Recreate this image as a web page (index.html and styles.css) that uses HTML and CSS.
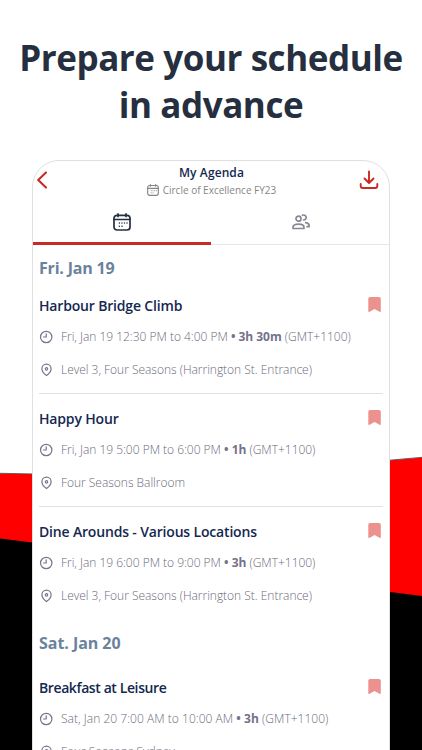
FILE: index.html
```
<!DOCTYPE html>
<html lang="en">
<head>
<meta charset="utf-8">
<title>My Agenda</title>
<link rel="stylesheet" href="styles.css">
</head>
<body>
<svg class="backdrop" viewBox="0 0 422 750" aria-hidden="true">
  <path d="M0 473.500L200 477L422 457.500V750H0z" fill="#f00"/>
  <path d="M0 473.300L200 477L422 457.300" fill="none" stroke="#444" stroke-width=".8"/>
  <path d="M0 538.500L32 542.500L390 592L422 596V750H0z" fill="#000"/>
</svg>
<svg class="symbols" aria-hidden="true">
  <symbol id="calendar" viewBox="0 0 18 18"><g fill="none" stroke="currentColor" stroke-linecap="round" stroke-width="1.700"><rect x="1" y="2.300" width="16" height="14.700" rx="3"/><path d="M1 6.500h16M5 .9v2.500M13 .9v2.500"/><path d="M8.900 10h.1M11.500 10h.1M14 10h.1M6.300 10h.1M6.300 13.200h.1M9 13.200h.1" stroke-width="1.400"/></g></symbol>
  <symbol id="clock" viewBox="0 0 14 14"><g fill="none" stroke="currentColor" stroke-width="1.200" stroke-linecap="round" stroke-linejoin="round"><circle cx="7.200" cy="7" r="5.700"/><path d="M7.200 3.800V7H4.500"/></g></symbol>
  <symbol id="pin" viewBox="0 0 14 14"><g fill="none" stroke="currentColor" stroke-width="1.200"><path d="M7.500 12.500C5.100 10.800 2.900 8.500 2.900 5.700a4.600 4.600 0 0 1 9.200 0c0 2.800-2.200 5.100-4.600 6.800z"/><circle cx="7.500" cy="5.900" r="1.200"/></g></symbol>
  <symbol id="bookmark" viewBox="0 0 13 15"><path d="M2 0h9a1.800 1.800 0 0 1 1.800 1.800v12.400c0 .8-.7 1-1.300.6L6.500 12l-4.800 2.800C1 15.200.3 15 .3 14.200V1.800A1.800 1.800 0 0 1 2 0z" fill="currentColor"/></symbol>
</svg>

<h1 class="headline">Prepare your schedule<br>in advance</h1>

<main class="card">
  <header class="topbar">
    <svg class="back" viewBox="0 0 12 18"><path d="M10 1.500L2.200 9L10 16.500" fill="none" stroke="currentColor" stroke-width="2.100" stroke-linecap="round" stroke-linejoin="round"/></svg>
    <div class="heading">
      <div class="title">My Agenda</div>
      <div class="subtitle"><svg class="mini"><use href="#calendar"/></svg><span>Circle of Excellence FY23</span></div>
    </div>
    <svg class="download" viewBox="0 0 20 20"><path d="M10 1.500v11M5.500 8.500L10 13L14.500 8.500M1.700 14v2a2 2 0 0 0 2 2h12.600a2 2 0 0 0 2-2v-2" fill="none" stroke="currentColor" stroke-width="1.900" stroke-linecap="round" stroke-linejoin="round"/></svg>
  </header>
  <nav class="tabs">
    <div class="tab active"><svg class="tab-icon"><use href="#calendar"/></svg></div>
    <div class="tab"><svg class="people" viewBox="0 0 18 16"><g fill="none" stroke="currentColor" stroke-width="1.700" stroke-linecap="round" stroke-linejoin="round"><circle cx="6.500" cy="4.700" r="2.500"/><path d="M1 14.500v-1c0-2.200 1.900-3.300 5.500-3.300s5.500 1.100 5.500 3.300v1z"/><path d="M10.500 1.300a2.500 2.500 0 1 1 1 4.700M13.700 8.600c2.300.3 3.400 1.400 3.400 2.900v1.200h-2"/></g></svg></div>
  </nav>

  <h2 class="day">Fri. Jan 19</h2>
  <article class="event">
    <div class="event-head"><h3>Harbour Bridge Climb</h3><svg class="bookmark"><use href="#bookmark"/></svg></div>
    <p class="row"><svg><use href="#clock"/></svg><span>Fri, Jan 19 12:30 PM to 4:00 PM <b>• 3h 30m</b> (GMT+1100)</span></p>
    <p class="row place"><svg><use href="#pin"/></svg><span>Level 3, Four Seasons (Harrington St. Entrance)</span></p>
  </article>
  <article class="event">
    <div class="event-head"><h3>Happy Hour</h3><svg class="bookmark"><use href="#bookmark"/></svg></div>
    <p class="row"><svg><use href="#clock"/></svg><span>Fri, Jan 19 5:00 PM to 6:00 PM <b>• 1h</b> (GMT+1100)</span></p>
    <p class="row place"><svg><use href="#pin"/></svg><span>Four Seasons Ballroom</span></p>
  </article>
  <article class="event last">
    <div class="event-head"><h3>Dine Arounds - Various Locations</h3><svg class="bookmark"><use href="#bookmark"/></svg></div>
    <p class="row"><svg><use href="#clock"/></svg><span>Fri, Jan 19 6:00 PM to 9:00 PM <b>• 3h</b> (GMT+1100)</span></p>
    <p class="row place"><svg><use href="#pin"/></svg><span>Level 3, Four Seasons (Harrington St. Entrance)</span></p>
  </article>
  <h2 class="day later">Sat. Jan 20</h2>
  <article class="event last">
    <div class="event-head"><h3 class="tight">Breakfast at Leisure</h3><svg class="bookmark"><use href="#bookmark"/></svg></div>
    <p class="row wide"><svg><use href="#clock"/></svg><span>Sat, Jan 20 7:00 AM to 10:00 AM <b>• 3h</b> (GMT+1100)</span></p>
    <p class="row place"><svg><use href="#pin"/></svg><span>Four Seasons Sydney</span></p>
  </article>
</main>
</body>
</html>
```
FILE: styles.css
```
* { box-sizing: border-box; }
html, body { height: 750px; overflow: hidden; }
body {
  margin: 0;
  position: relative;
  background: #fff;
  font-family: "Open Sans", "Noto Sans", sans-serif;
}
svg { display: block; flex: none; }
.symbols { display: none; }
.backdrop { position: absolute; inset: 0; width: 422px; height: 750px; z-index: -1; }
.headline {
  margin: 0;
  padding-top: 34px;
  height: 160px;
  text-align: center;
  font-size: 35px;
  line-height: 47px;
  font-weight: 700;
  letter-spacing: -.43px;
  color: #262f40;
  white-space: nowrap;
}
.card {
  width: 358px;
  height: 620px;
  margin-left: 32px;
  background: #fff;
  border: 1px solid #e0e0e3;
  border-radius: 27px 27px 0 0;
  overflow: hidden;
}
.topbar { display: flex; height: 42px; padding: 0 10px 0 3px; justify-content: space-between; }
.back { width: 12px; height: 18px; margin-top: 10px; color: #cb2a24; }
.download { width: 20px; height: 20px; margin-top: 9px; color: #cb2a24; }
.heading { text-align: center; margin-left: 16px; }
.title { font-size: 12px; line-height: 18px; margin-top: 3px; font-weight: 600; letter-spacing: .1px; color: #14284f; }
.subtitle { display: flex; align-items: center; gap: 4px; font-size: 10px; line-height: 16px; color: #858585; }
.mini { width: 12px; height: 12px; }
.tabs { display: flex; height: 42px; border-bottom: 1px solid #e6e6e8; }
.tab { width: 178px; display: flex; justify-content: center; padding-top: 10px; color: #888993; }
.tab.active { height: 42px; border-bottom: 3px solid #cb2a24; color: #262f40; }
.tab-icon { width: 18px; height: 18px; }
.people { width: 18px; height: 16px; margin: 1px 0 0 2px; }
.day { margin: 0; padding: 12px 0 0 6px; height: 36px; font-size: 16px; line-height: 22px; font-weight: 700; letter-spacing: -.2px; color: #6b829c; }
.day.later { height: 43px; letter-spacing: -.05px; }
.event { height: 113px; margin: 0 6px; border-bottom: 1px solid #e2e2e4; }
.event.last { border-bottom-color: transparent; }
.event-head { display: flex; justify-content: space-between; padding: 15px 2px 0 0; height: 36px; }
h3 { margin: 0; font-size: 14px; line-height: 20px; font-weight: 600; letter-spacing: -.17px; color: #14284f; white-space: nowrap; }
h3.tight { letter-spacing: -.4px; }
.bookmark { width: 13px; height: 15px; margin-top: 1px; color: #eb928e; }
.row { display: flex; align-items: center; gap: 8px; margin: 10px 0 0; height: 20px; font-size: 12px; line-height: 20px; font-weight: 300; letter-spacing: -.02px; color: #6c6a7a; white-space: nowrap; }
.row.wide { letter-spacing: .03px; }
.row.place { margin-top: 13px; }
.row svg { width: 14px; height: 14px; color: #77758a; }
.row b { color: #74728a; font-weight: 700; }
```
